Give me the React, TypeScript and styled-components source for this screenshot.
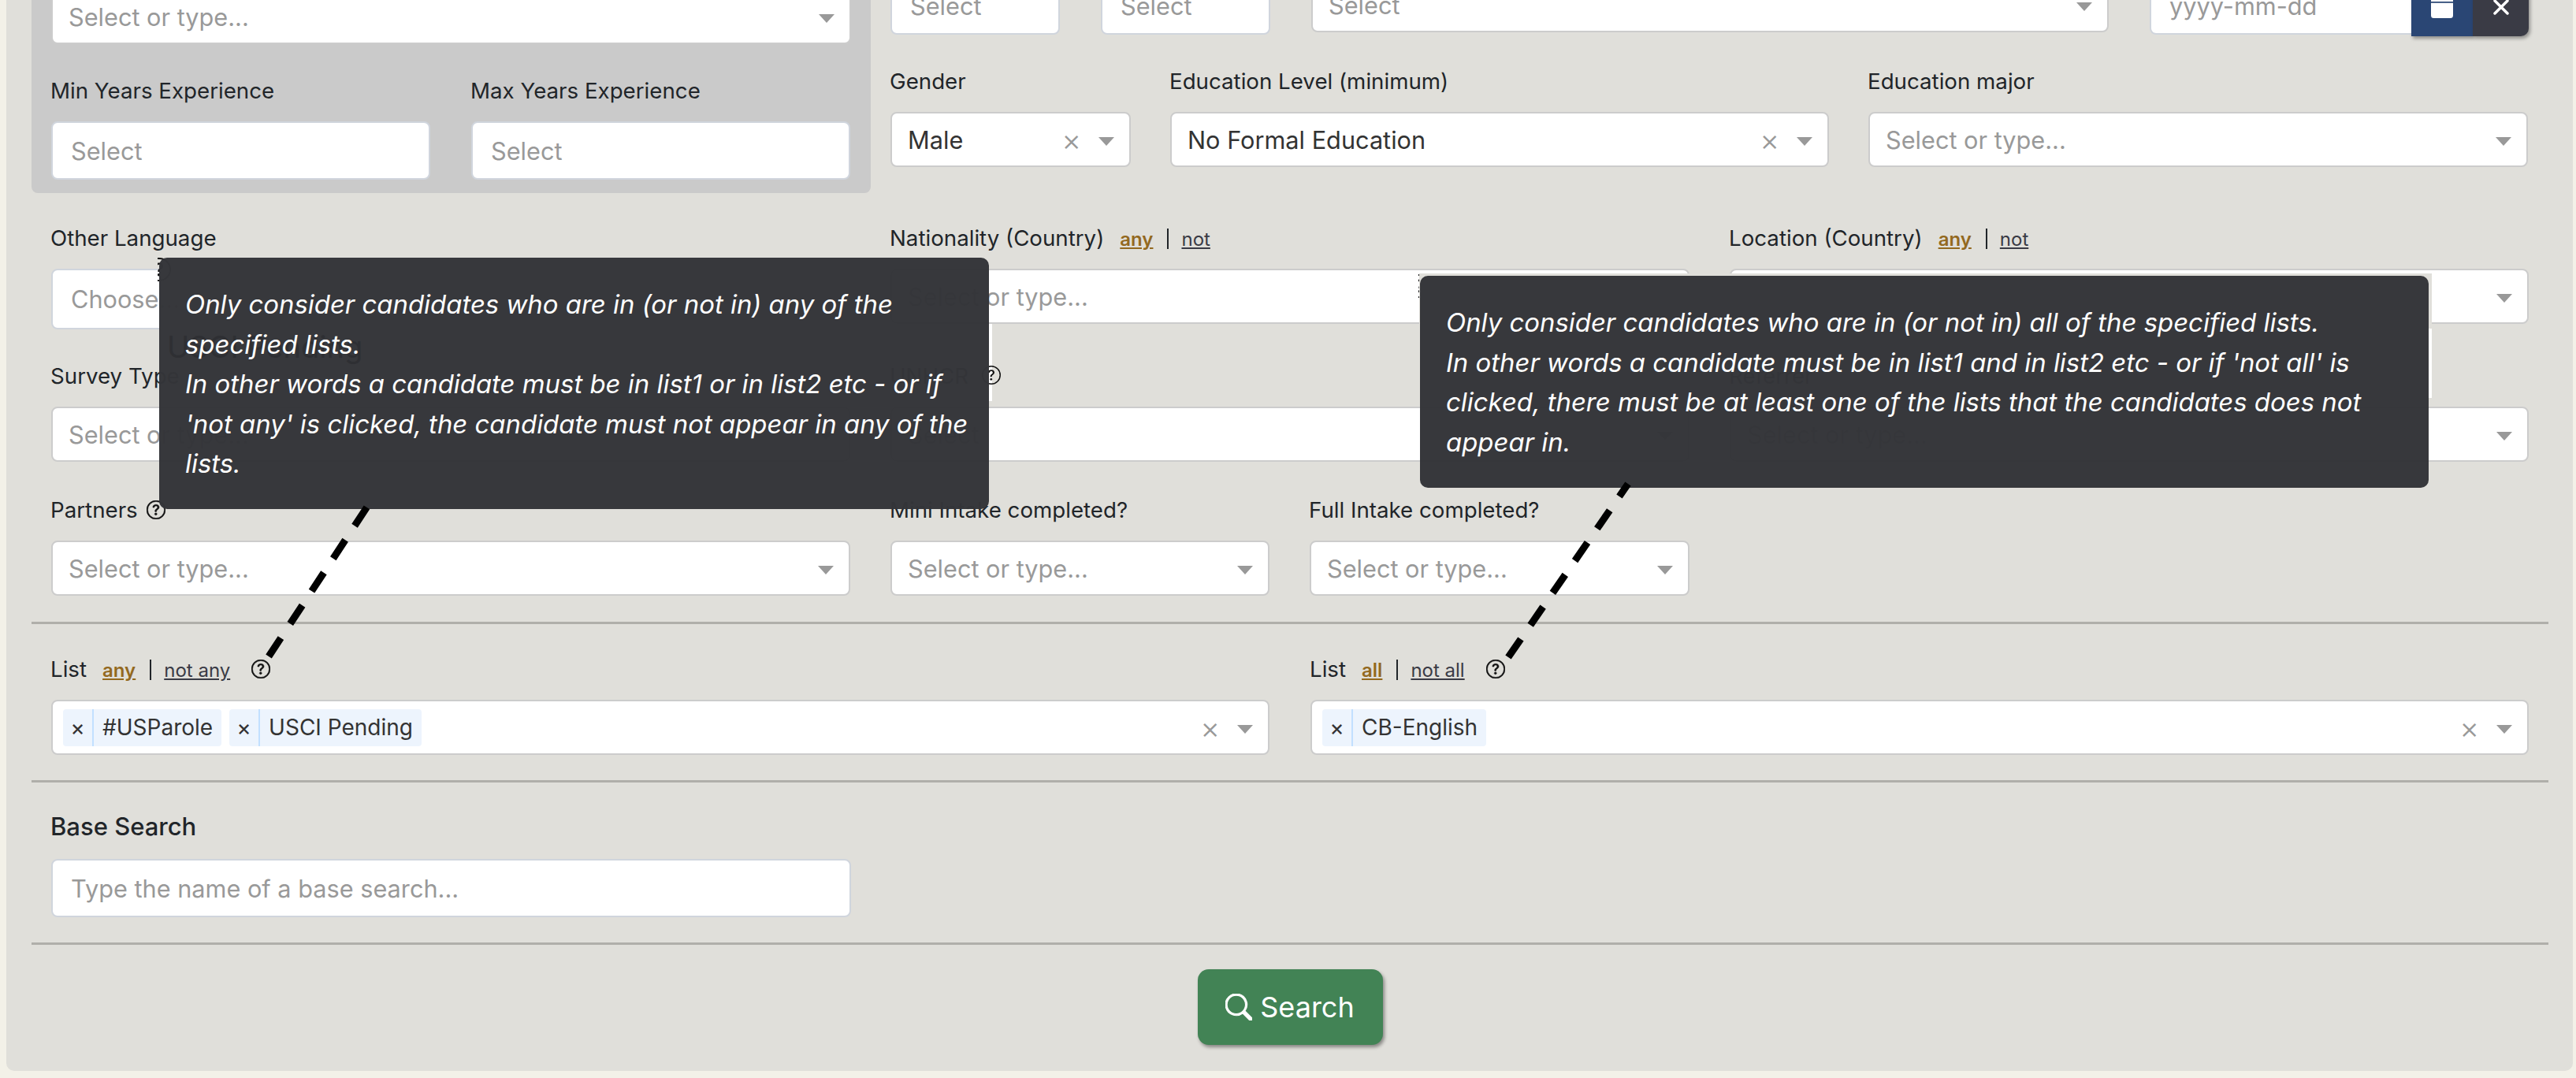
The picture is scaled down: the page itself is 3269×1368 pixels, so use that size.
import React from 'react';
import styled, { createGlobalStyle } from 'styled-components';
import { BsCalendarFill, BsQuestionCircle, BsSearch } from 'react-icons/bs';

const GlobalStyle = createGlobalStyle`
  html, body {
    margin: 0;
    padding: 0;
    background: #f3f1e8;
  }
  * {
    box-sizing: border-box;
  }
`;

const Page = styled.div`
  position: relative;
  width: 3269px;
  height: 1368px;
  overflow: hidden;
  font-family: Inter, 'Liberation Sans', sans-serif;
  color: #212529;
`;

const Panel = styled.div`
  width: 3257px;
  height: 1359px;
  margin-left: 8px;
  padding: 0 31px 0 32px;
  background: #e0dfda;
  border-radius: 0 0 10px 10px;
  overflow: hidden;
`;

const TopSection = styled.div`
  display: flex;
  align-items: flex-start;
  gap: 25px;
  margin-top: -30px;
`;

const GreyBox = styled.div`
  flex: 0 0 1065px;
  height: 275px;
  padding: 16px 25px 0;
  background: #cacaca;
  border-radius: 0 0 8px 8px;
`;

const TopFields = styled.div`
  flex: 0 0 2079px;
  padding-top: 1px;
`;

const Body = styled.div`
  padding: 0 25px;
`;

const Row = styled.div<{ $cols: string; $mt?: number; $gap?: number }>`
  display: grid;
  grid-template-columns: ${(p) => p.$cols};
  column-gap: ${(p) => p.$gap ?? 51}px;
  align-items: start;
  margin-top: ${(p) => p.$mt ?? 0}px;
`;

const Label = styled.div<{ $large?: boolean }>`
  display: flex;
  align-items: center;
  height: 36px;
  margin: 0 0 ${(p) => (p.$large ? 24 : 21)}px -1px;
  font-size: ${(p) => (p.$large ? 31 : 27.7)}px;
  font-weight: ${(p) => (p.$large ? 500 : 400)};
  white-space: nowrap;
`;

const ModeLink = styled.a<{ $active?: boolean }>`
  margin-top: 3px;
  font-size: 24px;
  font-weight: ${(p) => (p.$active ? 600 : 400)};
  color: ${(p) => (p.$active ? '#93691f' : '#3a3b45')};
  text-decoration: underline;
`;

const ModeSep = styled.span`
  width: 2px;
  height: 26px;
  margin: 2px 16px 0 18px;
  background: #212529;
`;

const ModeLinks = styled.span`
  display: inline-flex;
  align-items: center;
  margin-left: 20px;
`;

const Hint = styled.span<{ $ml?: number }>`
  display: inline-flex;
  margin-left: ${(p) => p.$ml ?? 11}px;
  color: #111;

  svg {
    stroke: currentColor;
    stroke-width: 0.35;
  }
`;

const SelectBox = styled.div`
  display: flex;
  align-items: center;
  height: 70px;
  padding: 0 19px 0 20px;
  background: #fff;
  border: 2px solid #cccccc;
  border-radius: 8px;
  font-size: 30.7px;
`;

const SelectText = styled.span<{ $value?: boolean }>`
  flex: 1;
  color: ${(p) => (p.$value ? '#333' : '#999')};
  white-space: nowrap;
  overflow: hidden;
`;

const ClearMark = styled.span`
  margin-right: 22px;
  font-size: 38px;
  line-height: 1;
  font-weight: 300;
  color: #999;
`;

const Caret = styled.span`
  width: 0;
  height: 0;
  margin: 4px 0 0;
  border-left: 10px solid transparent;
  border-right: 10px solid transparent;
  border-top: 11px solid #999;
`;

const TextInput = styled.input<{ $h?: number; $bare?: boolean }>`
  display: block;
  width: 100%;
  height: ${(p) => p.$h ?? 74}px;
  padding: 0 23px;
  background: #fff;
  border: 2px solid #d0d5dd;
  border-right: ${(p) => (p.$bare ? 'none' : '2px solid #d0d5dd')};
  border-radius: ${(p) => (p.$bare ? '8px 0 0 8px' : '8px')};
  font-family: inherit;
  font-size: 30.7px;
  outline: none;

  &::placeholder {
    color: #999;
    opacity: 1;
  }
`;

const DateGroup = styled.div`
  display: flex;
  align-items: flex-start;
`;

const DateButton = styled.button<{ $dark?: boolean }>`
  flex: 0 0 ${(p) => (p.$dark ? 71 : 78)}px;
  height: 75px;
  display: flex;
  align-items: center;
  justify-content: center;
  padding: 0;
  border: none;
  border-radius: ${(p) => (p.$dark ? '0 0 10px 0' : '0')};
  color: #fff;
  background: ${(p) => (p.$dark ? '#3a3b45' : '#2a4674')};
  box-shadow: 2px 3px 4px rgba(0, 0, 0, 0.35);
`;

const Chip = styled.span`
  display: inline-flex;
  align-items: stretch;
  height: 47px;
  margin-right: 10px;
  background: #edf4fd;
  border-radius: 4px;
  font-size: 28px;
  color: #333;
`;

const ChipRemove = styled.span`
  display: flex;
  align-items: center;
  justify-content: center;
  width: 39px;
  border-right: 2px solid #c2e0ff;
`;

const ChipText = styled.span`
  display: flex;
  align-items: center;
  padding: 0 11px;
  white-space: nowrap;
`;

const ChipArea = styled.div`
  flex: 1;
  display: flex;
  margin-left: -7px;
`;

const Divider = styled.hr<{ $mt: number }>`
  height: 3px;
  margin: ${(p) => p.$mt}px 0 0;
  border: none;
  background: #b0afaa;
`;

const ButtonRow = styled.div`
  display: flex;
  justify-content: center;
  margin-top: 31px;
`;

const SearchButton = styled.button`
  display: flex;
  align-items: center;
  justify-content: center;
  gap: 10px;
  width: 235px;
  height: 96px;
  padding: 0;
  border: none;
  border-radius: 14px;
  background: #428355;
  color: #fff;
  font-family: inherit;
  font-size: 36px;
  box-shadow: 2px 3px 4px rgba(0, 0, 0, 0.4);

  svg {
    stroke: currentColor;
    stroke-width: 0.5;
  }
`;

const TooltipHalo = styled.div<{ $l: number; $t: number; $w: number; $h: number; $c: string }>`
  position: absolute;
  left: ${(p) => p.$l}px;
  top: ${(p) => p.$t}px;
  width: ${(p) => p.$w}px;
  height: ${(p) => p.$h}px;
  background: ${(p) => p.$c};
`;

const FloatingHint = styled.span<{ $l: number; $t: number }>`
  position: absolute;
  left: ${(p) => p.$l}px;
  top: ${(p) => p.$t}px;
  display: flex;
  color: #111;
`;

/* the help icon that the tooltip grows out of: cut off at its left side */
const ClippedHint = styled(FloatingHint)`
  width: 17px;
  overflow: hidden;

  svg {
    flex: none;
    margin-left: -13px;
  }
`;

const Tooltip = styled.div<{ $l: number; $t: number; $w: number; $h: number }>`
  position: absolute;
  left: ${(p) => p.$l}px;
  top: ${(p) => p.$t}px;
  width: ${(p) => p.$w}px;
  height: ${(p) => p.$h}px;
  padding: 34px 15px 0 33px;
  background: rgba(52, 53, 57, 0.985);
  border-radius: 10px;
  color: #fff;
  font-size: 32.9px;
  font-style: italic;
  line-height: 50.5px;
`;

const TooltipGhost = styled.span`
  position: absolute;
  left: 10px;
  top: 91px;
  font-size: 38px;
  font-style: normal;
  line-height: 44px;
  white-space: nowrap;
  color: #2e2f33;
`;

const TooltipText = styled.div`
  position: relative;
`;

const Connectors = styled.svg`
  position: absolute;
  left: 0;
  top: 0;
  pointer-events: none;
`;

const Select = ({ text, value, clear }: { text: string; value?: boolean; clear?: boolean }) => (
  <SelectBox>
    <SelectText $value={value}>{text}</SelectText>
    {clear && <ClearMark>×</ClearMark>}
    <Caret />
  </SelectBox>
);

const Modes = ({ on, off }: { on: string; off: string }) => (
  <ModeLinks>
    <ModeLink $active>{on}</ModeLink>
    <ModeSep />
    <ModeLink>{off}</ModeLink>
  </ModeLinks>
);

const TagSelect = ({ tags }: { tags: string[] }) => (
  <SelectBox>
    <ChipArea>
      {tags.map((tag) => (
        <Chip key={tag}>
          <ChipRemove>×</ChipRemove>
          <ChipText>{tag}</ChipText>
        </Chip>
      ))}
    </ChipArea>
    <ClearMark>×</ClearMark>
    <Caret />
  </SelectBox>
);

export default function App() {
  return (
    <Page>
      <GlobalStyle />
      <Panel>
        <TopSection>
          <GreyBox>
            <Select text="Select or type..." />
            <Row $cols="481px 481px" $gap={52} $mt={41}>
              <div>
                <Label>Min Years Experience</Label>
                <TextInput placeholder="Select" />
              </div>
              <div>
                <Label>Max Years Experience</Label>
                <TextInput placeholder="Select" />
              </div>
            </Row>
          </GreyBox>
          <TopFields>
            <Row $cols="215px 215px 1012px 481px" $gap={52}>
              <TextInput placeholder="Select" $h={73} />
              <TextInput placeholder="Select" $h={73} />
              <Select text="Select" />
              <DateGroup>
                <TextInput placeholder="yyyy-mm-dd" $h={73} $bare />
                <DateButton>
                  <BsCalendarFill size={28} />
                </DateButton>
                <DateButton $dark>
                  <svg width="20" height="20" viewBox="0 0 20 20">
                    <path d="M2 2 L18 18 M18 2 L2 18" stroke="#fff" strokeWidth="3.5" strokeLinecap="round" />
                  </svg>
                </DateButton>
              </DateGroup>
            </Row>
            <Row $cols="305px 836px 837px" $gap={50} $mt={39}>
              <div>
                <Label>Gender</Label>
                <Select text="Male" value clear />
              </div>
              <div>
                <Label>Education Level (minimum)</Label>
                <Select text="No Formal Education" value clear />
              </div>
              <div>
                <Label>Education major</Label>
                <Select text="Select or type..." />
              </div>
            </Row>
          </TopFields>
        </TopSection>

        <Body>
          <Row $cols="1014px 1014px 1014px" $mt={39}>
            <div>
              <Label>Other Language</Label>
              <TextInput placeholder="Choose..." $h={77} />
            </div>
            <div>
              <Label>
                Nationality (Country)
                <Modes on="any" off="not" />
              </Label>
              <Select text="Select or type..." />
            </div>
            <div>
              <Label>
                Location (Country)
                <Modes on="any" off="not" />
              </Label>
              <Select text="Select or type..." />
            </div>
          </Row>

          <Row $cols="1014px 1014px 1014px" $mt={41}>
            <div>
              <Label>Survey Type</Label>
              <Select text="Select or type..." />
            </div>
            <div>
              <Label>UNHCR</Label>
              <Select text="Select" />
            </div>
            <div>
              <Label>Referrer</Label>
              <Select text="Select or type..." />
            </div>
          </Row>

          <Row $cols="1014px 481px 482px" $mt={43}>
            <div>
              <Label>
                Partners
                <Hint>
                  <BsQuestionCircle size={24} />
                </Hint>
              </Label>
              <Select text="Select or type..." />
            </div>
            <div>
              <Label>Mini Intake completed?</Label>
              <Select text="Select or type..." />
            </div>
            <div>
              <Label>Full Intake completed?</Label>
              <Select text="Select or type..." />
            </div>
          </Row>
        </Body>

        <Divider $mt={33} />

        <Body>
          <Row $cols="1546px 1546px" $mt={39} $gap={52}>
            <div>
              <Label>
                List
                <Modes on="any" off="not any" />
                <Hint $ml={27}>
                  <BsQuestionCircle size={24} />
                </Hint>
              </Label>
              <TagSelect tags={['#USParole', 'USCI Pending']} />
            </div>
            <div>
              <Label>
                List
                <Modes on="all" off="not all" />
                <Hint $ml={27}>
                  <BsQuestionCircle size={24} />
                </Hint>
              </Label>
              <TagSelect tags={['CB-English']} />
            </div>
          </Row>
        </Body>

        <Divider $mt={32} />

        <Body>
          <Row $cols="1015px" $mt={37}>
            <div>
              <Label $large>Base Search</Label>
              <TextInput placeholder="Type the name of a base search..." />
            </div>
          </Row>
        </Body>

        <Divider $mt={32} />

        <ButtonRow>
          <SearchButton>
            <BsSearch size={34} />
            Search
          </SearchButton>
        </ButtonRow>
      </Panel>

      <ClippedHint $l={200} $t={327}>
        <BsQuestionCircle size={30} />
      </ClippedHint>
      <ClippedHint $l={1800} $t={348}>
        <BsQuestionCircle size={30} />
      </ClippedHint>

      <TooltipHalo $l={1255} $t={411} $w={4} $h={98} $c="#ffffff" />
      <FloatingHint $l={1246} $t={464}>
        <BsQuestionCircle size={24} />
      </FloatingHint>
      <TooltipHalo $l={1801} $t={347} $w={1285} $h={70} $c="#e0dfda" />
      <TooltipHalo $l={3082} $t={417} $w={4} $h={88} $c="#ffffff" />

      <Tooltip $l={202} $t={327} $w={1053} $h={319}>
        <TooltipGhost>USCI Pending</TooltipGhost>
        <TooltipText>
          Only consider candidates who are in (or not in) any of the specified lists.
          <br />
          In other words a candidate must be in list1 or in list2 etc - or if 'not any' is clicked, the candidate must not appear in any of the lists.
        </TooltipText>
      </Tooltip>

      <Tooltip $l={1802} $t={350} $w={1280} $h={269}>
        <TooltipText>
          Only consider candidates who are in (or not in) all of the specified lists.
          <br />
          In other words a candidate must be in list1 and in list2 etc - or if 'not all' is clicked, there must be at least one of the lists that the candidates does not appear in.
        </TooltipText>
      </Tooltip>

      <Connectors width="3269" height="1368" viewBox="0 0 3269 1368">
        <line x1="341" y1="833" x2="466" y2="643" stroke="#000" strokeWidth="9" strokeDasharray="28 21.6" />
        <line x1="1914" y1="834" x2="2066" y2="614" stroke="#000" strokeWidth="9" strokeDasharray="28 21.6" />
      </Connectors>
    </Page>
  );
}
